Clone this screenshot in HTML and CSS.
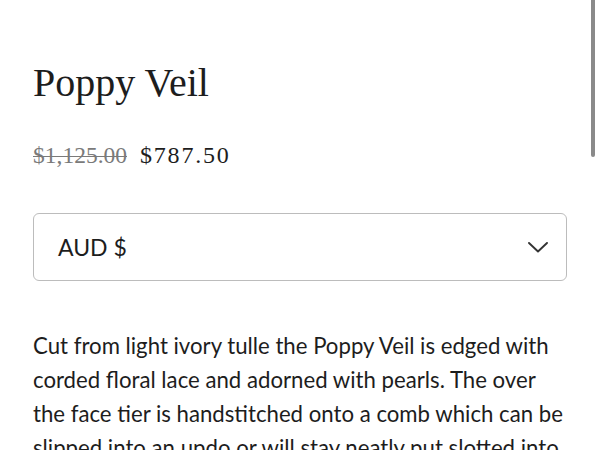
FILE: index.html
```html
<!DOCTYPE html>
<html lang="en">
<head>
<meta charset="utf-8">
<title>Poppy Veil</title>
<link rel="stylesheet" href="styles.css">
</head>
<body>
<main class="product">
  <h1 class="title">Poppy Veil</h1>
  <div class="prices">
    <s class="price-old">$1,125.00</s>
    <span class="price-new">$787.50</span>
  </div>
  <div class="select">
    <span class="select-value">AUD $</span>
    <svg class="chevron" width="20" height="11" viewBox="0 0 20 11" aria-hidden="true">
      <path d="M1 1 L10 9.5 L19 1" fill="none" stroke="#333" stroke-width="1.9" stroke-linecap="round" stroke-linejoin="round"/>
    </svg>
  </div>
  <p class="desc">Cut from light ivory tulle the Poppy Veil is edged with corded floral lace and adorned with pearls. The over the face tier is handstitched onto a comb which can be slipped into an updo or will stay neatly put slotted into your hair.</p>
</main>
<div class="scrollbar"></div>
</body>
</html>
```

FILE: styles.css
```css
html, body {
  margin: 0;
  padding: 0;
  background: #ffffff;
  overflow: hidden;
}
body {
  height: 450px;
}
.product {
  padding: 60px 33px 0 33px;
}
.title {
  margin: 0;
  font-family: "Liberation Serif", "Times New Roman", serif;
  font-weight: normal;
  font-size: 40px;
  line-height: 46px;
  color: #1d1d1d;
}
.prices {
  margin-top: 34px;
  display: flex;
  align-items: baseline;
  gap: 13px;
  font-family: "Liberation Serif", "Times New Roman", serif;
  line-height: 30px;
}
.price-old {
  font-size: 23.5px;
  color: #7a7a7a;
  text-decoration-thickness: 1px;
}
.price-new {
  font-size: 24px;
  letter-spacing: 1.8px;
  color: #1d1d1d;
}
.select {
  margin-top: 43px;
  height: 66px;
  box-sizing: content-box;
  border: 1.5px solid #bcbcbc;
  border-radius: 6px;
  display: flex;
  align-items: center;
  justify-content: space-between;
  padding: 0 18px 0 24px;
}
.select-value {
  font-family: Lato, "Noto Sans", sans-serif;
  font-size: 23px;
  color: #1d1d1d;
}
.chevron {
  display: block;
}
.desc {
  margin: 48px 0 0 0;
  font-family: Lato, "Noto Sans", sans-serif;
  font-size: 22.2px;
  line-height: 34px;
  color: #1d1d1d;
}
.scrollbar {
  position: absolute;
  top: 0;
  right: 5px;
  width: 4px;
  height: 157px;
  background: #8a8a8a;
  border-radius: 0 0 2px 2px;
}
```
